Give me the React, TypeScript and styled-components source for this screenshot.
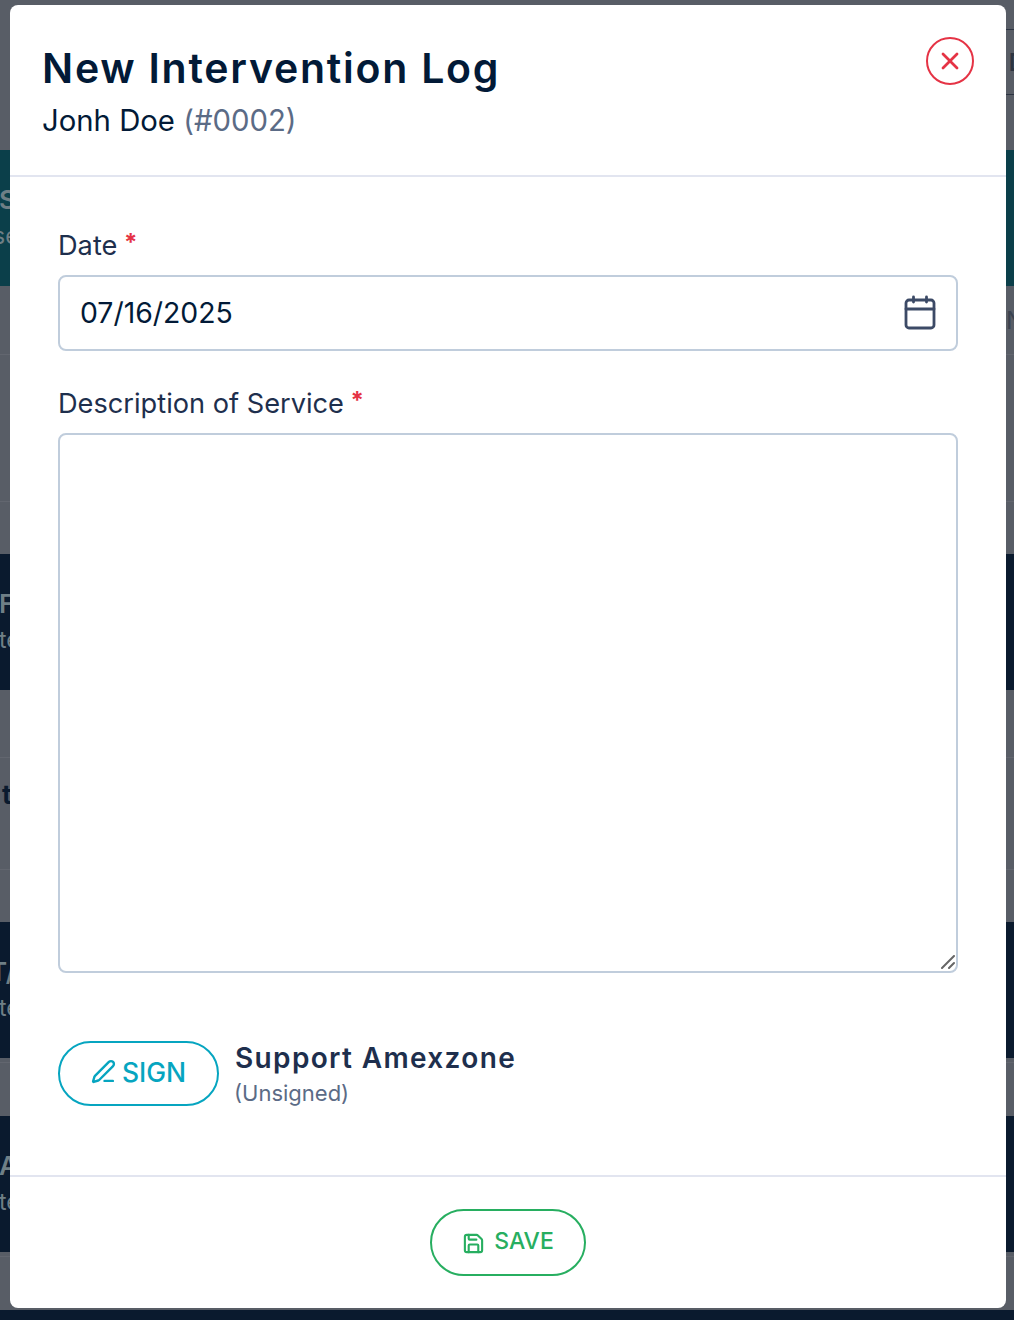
import styled, { createGlobalStyle } from "styled-components";
import { PenLine, Save, X } from "lucide-react";

const GlobalStyle = createGlobalStyle`
  html, body {
    margin: 0;
    padding: 0;
    background: #0a1a2e;
    font-family: "Inter", "Liberation Sans", sans-serif;
  }
  * {
    box-sizing: border-box;
  }
`;

const navyRows = {
  f: ["F", "te"],
  t: ["T/", "te"],
  a: ["A", "te"],
};

export default function App() {
  return (
    <>
      <GlobalStyle />
      <Page>
        <TopCard>
          <TopRow $height={30} />
          <TopRow $height={65}>
            <TopCell>D</TopCell>
          </TopRow>
        </TopCard>
        <Spacer $height={55} />
        <Banner $tone="#0b3f4a">
          <BannerTitle>S</BannerTitle>
          <BannerText $shift={-7}>se</BannerText>
        </Banner>
        <TableRow $height={69}>
          <RightCell>N</RightCell>
        </TableRow>
        <TableRow $height={147} />
        <Spacer $height={52} />
        <Banner $tone="#0a1a2e">
          <BannerTitle>{navyRows.f[0]}</BannerTitle>
          <BannerText>{navyRows.f[1]}</BannerText>
        </Banner>
        <TableRow $height={68} />
        <TableRow $height={112}>
          <DarkCell>t</DarkCell>
        </TableRow>
        <Spacer $height={52} />
        <Banner $tone="#0a1a2e">
          <BannerTitle $shift={-10}>{navyRows.t[0]}</BannerTitle>
          <BannerText>{navyRows.t[1]}</BannerText>
        </Banner>
        <TableRow $height={5} />
        <Spacer $height={53} />
        <Banner $tone="#0a1a2e">
          <BannerTitle>{navyRows.a[0]}</BannerTitle>
          <BannerText>{navyRows.a[1]}</BannerText>
        </Banner>
        <TableRow $height={5} />
        <Spacer $height={53} />
        <Modal>
          <Header>
            <Title>New Intervention Log</Title>
            <Subtitle>
              Jonh Doe <SubtitleId>(#0002)</SubtitleId>
            </Subtitle>
            <CloseButton type="button" aria-label="Close">
              <X size={28} strokeWidth={2.4} />
            </CloseButton>
          </Header>
          <Body>
            <DateField>
              <Label>
                Date <Required>*</Required>
              </Label>
              <DateBox>
                <DateValue>07/16/2025</DateValue>
                <svg width="32" height="36" viewBox="0 0 32 36" fill="none" stroke="#3c4a66" strokeWidth="2.8" strokeLinecap="round" strokeLinejoin="round">
                  <rect x="2" y="5" width="28" height="28" rx="3" />
                  <path d="M2 14h28M9.5 2v5M22.5 2v5" />
                </svg>
              </DateBox>
            </DateField>
            <div>
              <Label>
                Description of Service <Required>*</Required>
              </Label>
              <AreaWrap>
                <Area />
                <Grip width="14" height="14" viewBox="0 0 14 14" stroke="#666" strokeWidth="2" strokeLinecap="round">
                  <path d="M1 13L13 1M8 13l5-5" />
                </Grip>
              </AreaWrap>
            </div>
            <SignRow>
              <SignButton type="button">
                <PenLine size={25} strokeWidth={2.3} />
                SIGN
              </SignButton>
              <Signer>
                <SignerName>Support Amexzone</SignerName>
                <SignerStatus>(Unsigned)</SignerStatus>
              </Signer>
            </SignRow>
          </Body>
          <Footer>
            <SaveButton type="button">
              <SaveIcon size={23} strokeWidth={2.2} />
              SAVE
            </SaveButton>
          </Footer>
        </Modal>
      </Page>
    </>
  );
}

const Page = styled.div`
  position: relative;
  width: 1014px;
  height: 1320px;
  overflow: hidden;
  background: #0a1a2e;
`;

const TopCard = styled.div`
  padding-left: 20px;
  background: #585d66;
`;

const TopRow = styled.div<{ $height: number }>`
  height: ${(p) => p.$height}px;
  display: flex;
  align-items: center;
  justify-content: flex-end;
  border-bottom: 1px solid #2c3442;
`;

const TopCell = styled.span`
  margin-right: -12px;
  font-size: 24px;
  font-weight: 600;
  color: #2c3442;
`;

const Spacer = styled.div<{ $height: number }>`
  height: ${(p) => p.$height}px;
  background: #585d66;
`;

const Banner = styled.div<{ $tone: string }>`
  height: 136px;
  display: flex;
  flex-direction: column;
  justify-content: center;
  gap: 8px;
  background: ${(p) => p.$tone};
`;

const BannerTitle = styled.div<{ $shift?: number }>`
  margin-left: ${(p) => p.$shift ?? -1}px;
  font-size: 26px;
  line-height: 28px;
  font-weight: 600;
  color: #6f7f86;
`;

const BannerText = styled.div<{ $shift?: number }>`
  margin-left: ${(p) => p.$shift ?? -1}px;
  font-size: 23px;
  line-height: 28px;
  color: #6f7f86;
`;

const TableRow = styled.div<{ $height: number }>`
  height: ${(p) => p.$height}px;
  display: flex;
  align-items: center;
  justify-content: space-between;
  background: #585d66;
  border-bottom: 1px solid #62666f;
`;

const RightCell = styled.span`
  margin-left: auto;
  margin-right: -10px;
  font-size: 24px;
  color: #3b4250;
`;

const DarkCell = styled.span`
  margin: 0 0 38px 2px;
  font-size: 26px;
  font-weight: 700;
  color: #0a1a2e;
`;

const Modal = styled.div`
  position: absolute;
  left: 10px;
  top: 5px;
  width: 996px;
  height: 1303px;
  display: flex;
  flex-direction: column;
  background: #fff;
  border-radius: 8px;
`;

const Header = styled.div`
  position: relative;
  height: 172px;
  padding: 38px 32px 0;
  border-bottom: 2px solid #e2e5f0;
`;

const Title = styled.h1`
  margin: 0;
  font-size: 41px;
  line-height: 50px;
  font-weight: 600;
  letter-spacing: 1.75px;
  color: #021a37;
`;

const Subtitle = styled.div`
  margin-top: 10px;
  font-size: 29.3px;
  line-height: 36px;
  color: #021a37;
`;

const SubtitleId = styled.span`
  color: #5b6b86;
`;

const CloseButton = styled.button`
  position: absolute;
  right: 32px;
  top: 32px;
  width: 48px;
  height: 48px;
  padding: 0;
  display: flex;
  align-items: center;
  justify-content: center;
  background: #fff;
  border: 2px solid #e53345;
  border-radius: 50%;
  color: #e53345;
`;

const Body = styled.div`
  flex: 1;
  padding: 48px 48px 0;
  display: flex;
  flex-direction: column;
`;

const DateField = styled.div`
  margin-bottom: 32px;
`;

const Label = styled.div`
  height: 36px;
  margin-bottom: 14px;
  font-size: 27.2px;
  line-height: 36px;
  color: #1e2f4d;
`;

const Required = styled.span`
  margin-left: -1px;
  color: #e53345;
  font-size: 24px;
  font-weight: 700;
  vertical-align: 4px;
`;

const DateBox = styled.div`
  height: 76px;
  padding: 0 20px;
  display: flex;
  align-items: center;
  justify-content: space-between;
  border: 2px solid #c0cddc;
  border-radius: 8px;
`;

const DateValue = styled.span`
  margin-top: -2px;
  font-size: 28.4px;
  color: #021a37;
`;

const AreaWrap = styled.div`
  position: relative;
  height: 540px;
`;

const Area = styled.textarea`
  display: block;
  width: 100%;
  height: 100%;
  border: 2px solid #c0cddc;
  border-radius: 8px;
  resize: none;
  outline: none;
  background: #fff;
`;

const Grip = styled.svg`
  position: absolute;
  right: 3px;
  bottom: 4px;
`;

const SignRow = styled.div`
  margin-top: 68px;
  display: flex;
  align-items: flex-start;
  gap: 16px;
`;

const SignButton = styled.button`
  width: 161px;
  height: 65px;
  display: flex;
  align-items: center;
  justify-content: center;
  gap: 6px;
  padding: 0 0 4px;
  background: #fff;
  border: 2px solid #06a5c0;
  border-radius: 33px;
  color: #06a5c0;
  font-family: inherit;
  font-size: 26.5px;
  font-weight: 500;
`;

const Signer = styled.div`
  display: flex;
  flex-direction: column;
`;

const SignerName = styled.div`
  font-size: 28px;
  line-height: 34px;
  font-weight: 600;
  letter-spacing: 1.35px;
  color: #1e2f4d;
`;

const SignerStatus = styled.div`
  margin-top: 3px;
  margin-left: -1px;
  font-size: 22px;
  line-height: 30px;
  color: #5b6b86;
`;

const Footer = styled.div`
  height: 133px;
  border-top: 2px solid #e2e5f0;
  display: flex;
  justify-content: center;
  padding-top: 32px;
`;

const SaveButton = styled.button`
  width: 156px;
  height: 67px;
  display: flex;
  align-items: center;
  justify-content: center;
  gap: 9px;
  padding: 0 0 4px;
  background: #fff;
  border: 2px solid #27ae60;
  border-radius: 34px;
  color: #27ae60;
  font-family: inherit;
  font-size: 23px;
  font-weight: 500;
`;

const SaveIcon = styled(Save)`
  transform: translateY(3px);
`;
